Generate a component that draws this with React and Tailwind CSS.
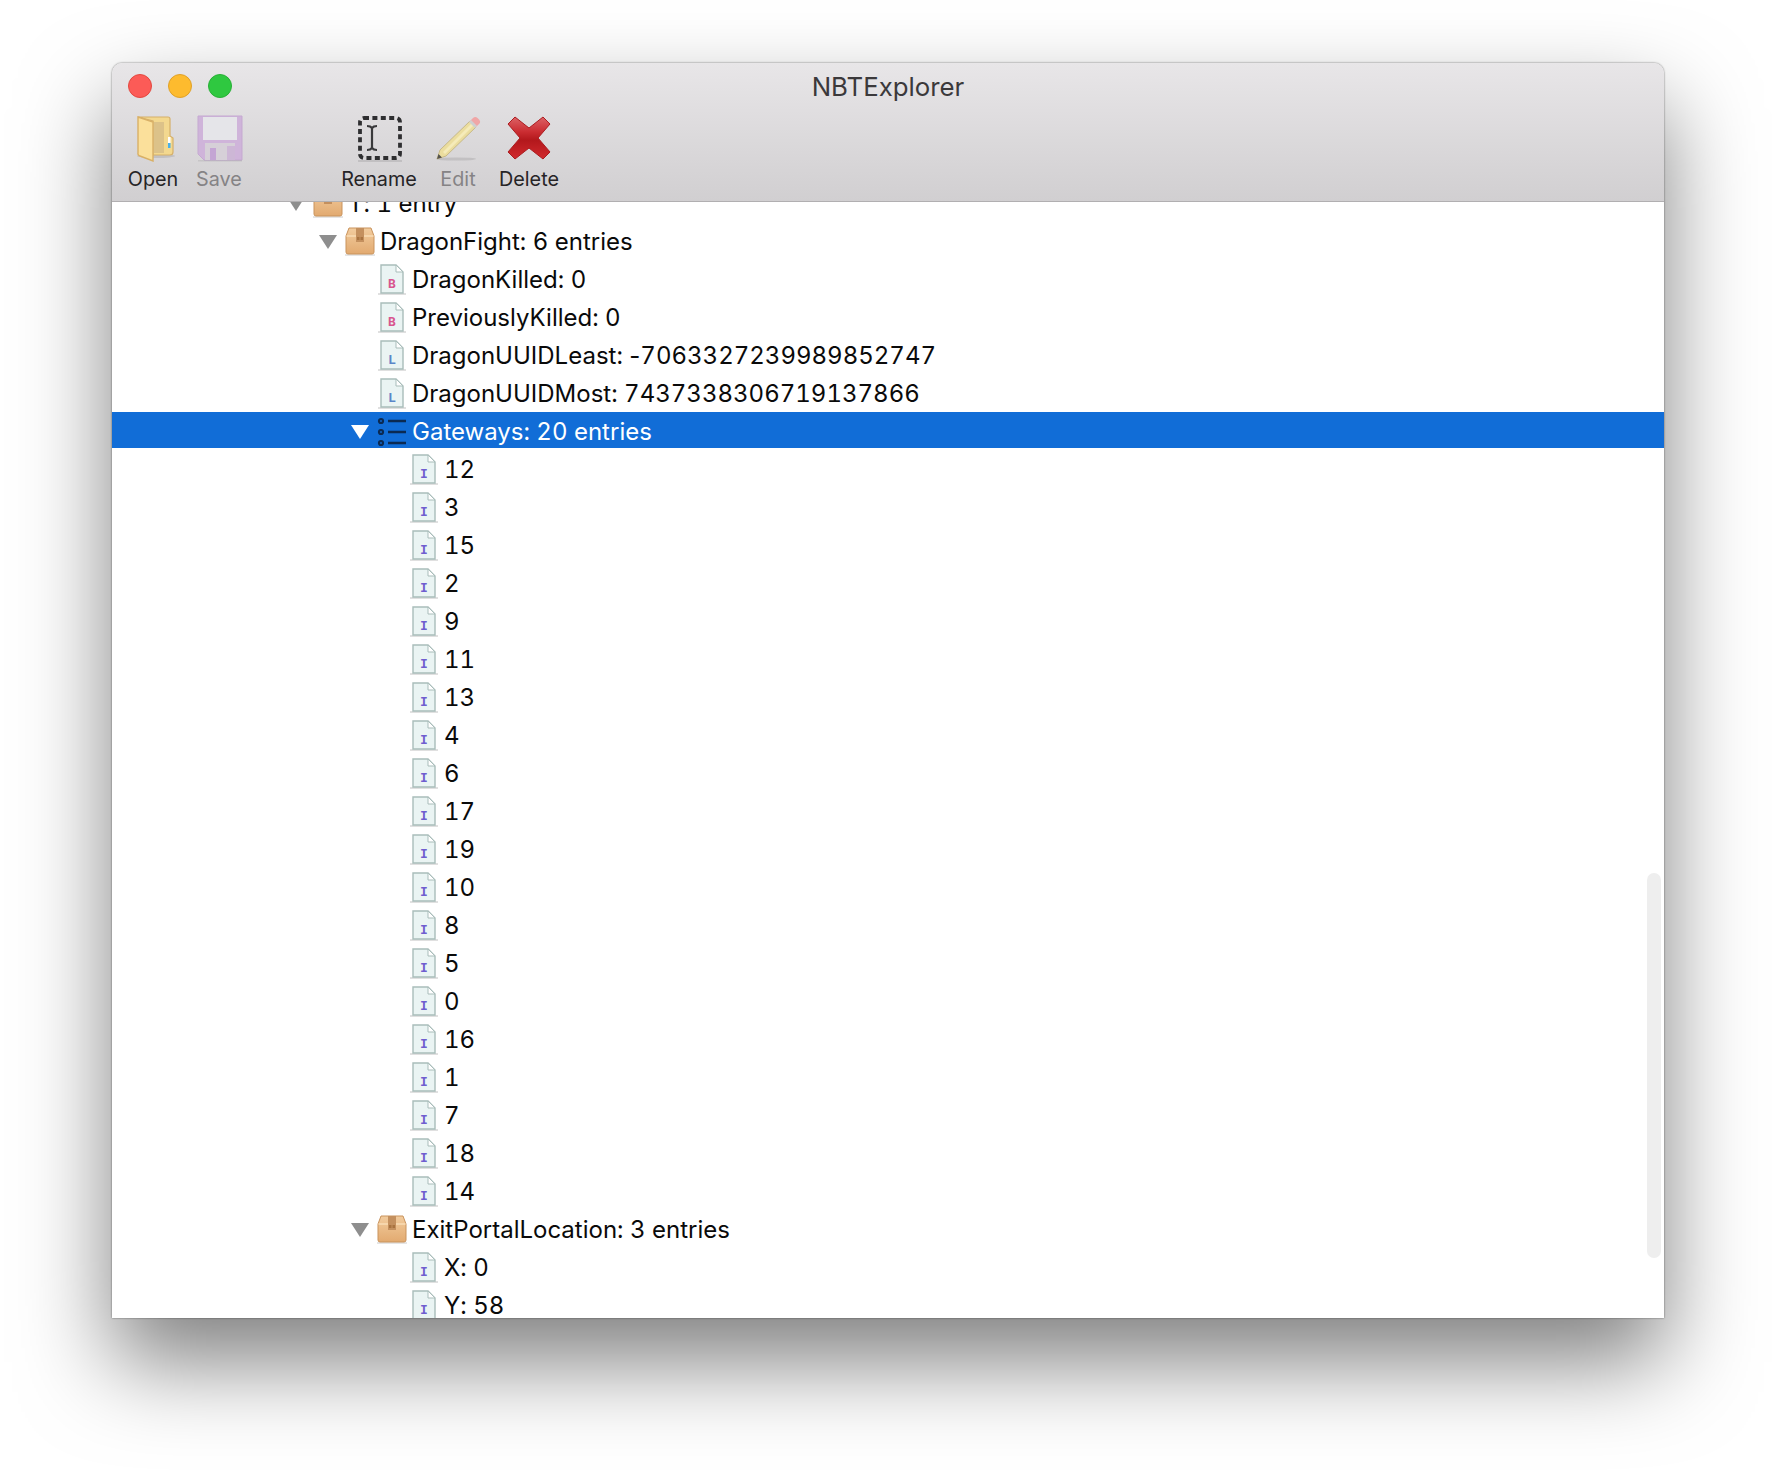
import React from "react";

const levelPadding = {
  0: "pl-[172px]",
  1: "pl-[204px]",
  2: "pl-[236px]",
  3: "pl-[268px]",
};

const gatewayIds = [12, 3, 15, 2, 9, 11, 13, 4, 6, 17, 19, 10, 8, 5, 0, 16, 1, 7, 18, 14];

const rows = [
  { level: 0, kind: "box", open: true, label: "T: 1 entry" },
  { level: 1, kind: "box", open: true, label: "DragonFight: 6 entries" },
  { level: 2, kind: "B", label: "DragonKilled: 0" },
  { level: 2, kind: "B", label: "PreviouslyKilled: 0" },
  {
    level: 2,
    kind: "L",
    // tabular figures widen the hyphen too, so it sits outside them
    label: (
      <>
        DragonUUIDLeast: <span className="[font-variant-numeric:normal]">-</span>7063327239989852747
      </>
    ),
  },
  { level: 2, kind: "L", label: "DragonUUIDMost: 7437338306719137866" },
  { level: 2, kind: "list", open: true, selected: true, label: "Gateways: 20 entries" },
  ...gatewayIds.map((id) => ({ level: 3, kind: "I", label: String(id) })),
  { level: 2, kind: "box", open: true, label: "ExitPortalLocation: 3 entries" },
  { level: 3, kind: "I", label: "X: 0" },
  { level: 3, kind: "I", label: "Y: 58" },
];

const letterColors = { B: "#d8568f", L: "#5a86c8", I: "#6f5ecf" };

const FolderIcon = () => (
  <svg width="48" height="48" viewBox="0 0 48 48">
    <ellipse cx="27" cy="42" rx="19" ry="2" fill="#000" opacity="0.1" />
    <path d="M9 3h30a2 2 0 0 1 2 2v17l3 2v14a3 3 0 0 1-3 3H24V7z" fill="#f3d88f" stroke="#d6b06a" strokeWidth="1.200" />
    <rect x="24" y="8" width="11" height="31" fill="#dcc289" />
    <path d="M9 3l15 5v39L11 42a2.500 2.500 0 0 1-2-3z" fill="#fbe09b" stroke="#d9b066" strokeWidth="1.400" />
    <rect x="39" y="23" width="2.500" height="6" fill="#ffffff" />
    <rect x="39" y="29" width="2.500" height="5" fill="#4ab1e8" />
  </svg>
);

const SaveIcon = () => (
  <svg width="48" height="48" viewBox="0 0 48 48">
    <path d="M3 2h44v44H9l-6-6V2z" fill="#cfb4da" stroke="#c5a9d1" strokeWidth="1" />
    <rect x="8" y="3" width="34" height="23" fill="#e5e5e9" />
    <rect x="10" y="29" width="30" height="17" fill="#d6d0d8" />
    <rect x="15" y="34" width="6" height="12" fill="#c4a5d4" />
    <rect x="32" y="32" width="8" height="14" fill="#cdb7d6" />
    <rect x="3" y="46" width="44" height="1.500" fill="#000" opacity="0.08" />
  </svg>
);

const RenameIcon = () => (
  <svg width="48" height="48" viewBox="0 0 48 48">
    <rect x="5" y="4" width="40" height="40" rx="4" fill="none" stroke="#2e2e30" strokeWidth="3.800" strokeDasharray="5 3.400" />
    <path d="M12 12c2 0 4 .6 5 2 1-1.400 3-2 5-2M17 14v20M12 36c2 0 4-.6 5-2 1 1.400 3 2 5 2" fill="none" stroke="#39393b" strokeWidth="2.200" />
    <rect x="3" y="46" width="44" height="2" fill="#000" opacity="0.1" />
  </svg>
);

const PencilIcon = () => (
  <svg width="48" height="48" viewBox="0 0 48 48">
    <ellipse cx="22" cy="45" rx="20" ry="1.600" fill="#000" opacity="0.1" />
    <path d="M3 45l3-9L36 7l6 6-30 29-9 3z" fill="#ebdd9e" stroke="#c7b98a" strokeWidth="1" />
    <path d="M9 38L38 9l2 2L11 40z" fill="#f5ebb9" />
    <path d="M3 45l1.500-5 3.500 3.500z" fill="#55534e" />
    <path d="M36 7l3-3c1.500-1.500 3-1.500 4.500 0l1.500 1.500c1.500 1.500 1.500 3 0 4.500l-3 3z" fill="#f0a6a6" />
    <path d="M35 8l2-2 6 6-2 2z" fill="#cfcfcf" />
  </svg>
);

const DeleteIcon = () => (
  <svg width="48" height="48" viewBox="0 0 48 48">
    <defs>
      <linearGradient id="del" x1="0" y1="0" x2="0" y2="1">
        <stop offset="0" stopColor="#dc6266" />
        <stop offset="0.35" stopColor="#cb2d32" />
        <stop offset="0.55" stopColor="#b3181c" />
        <stop offset="1" stopColor="#d12a2e" />
      </linearGradient>
    </defs>
    <path d="M10 3L24 14 38 3l7 7-12 14 12 14-7 7-14-11-14 11-7-7 12-14L3 10z" fill="url(#del)" stroke="#ab1c20" strokeWidth="1" strokeLinejoin="round" />
  </svg>
);

const BoxIcon = () => (
  <svg width="32" height="30" viewBox="0 0 32 30">
    <defs>
      <linearGradient id="box" x1="0" y1="0" x2="0" y2="1">
        <stop offset="0" stopColor="#f2cc9e" />
        <stop offset="1" stopColor="#e2aa70" />
      </linearGradient>
    </defs>
    <rect x="1" y="27" width="30" height="2" fill="#000" opacity="0.1" />
    <path d="M5 1h22l3 8v16a2 2 0 0 1-2 2H4a2 2 0 0 1-2-2V9z" fill="url(#box)" stroke="#c9935c" strokeWidth="1" />
    <path d="M2.500 9h27" stroke="#f8dcb6" strokeWidth="1.500" />
    <path d="M12 1h8v14h-8z" fill="#c4905e" />
    <path d="M13 10h2.500v3H13zM16.500 10H19v3h-2.500z" fill="#a9733f" />
  </svg>
);

const FileIcon = ({ letter }) => (
  <svg width="32" height="32" viewBox="0 0 32 32">
    <rect x="2" y="29" width="28" height="2" fill="#000" opacity="0.12" />
    <path d="M5 1h15l7 7v21H5z" fill="#eaf4f3" stroke="#a9bdba" strokeWidth="1.400" />
    <path d="M20 1v7h7z" fill="#fff" stroke="#a9bdba" strokeWidth="1" />
    <text x="16" y="24" textAnchor="middle" fontSize="13" fontWeight="700" fontFamily="DejaVu Sans Mono, monospace" fill={letterColors[letter]}>
      {letter}
    </text>
  </svg>
);

const ListIcon = () => (
  <svg width="32" height="30" viewBox="0 0 32 30">
    <g fill="none" stroke="#0b2a52" strokeWidth="2.200">
      <circle cx="5" cy="4" r="2" />
      <circle cx="5" cy="15" r="2" />
      <circle cx="5" cy="26" r="2" />
    </g>
    <path d="M12 4h18M12 15h18M12 26h18" stroke="#0b2a52" strokeWidth="2.500" />
  </svg>
);

const RowIcon = ({ kind }) => {
  if (kind === "box") return <BoxIcon />;
  if (kind === "list") return <ListIcon />;
  return <FileIcon letter={kind} />;
};

const toolbarItems = [
  { label: "Open", icon: <FolderIcon />, width: "w-[66px]" },
  { label: "Save", icon: <SaveIcon />, width: "w-[66px]", disabled: true },
  { spacer: true },
  { label: "Rename", icon: <RenameIcon />, width: "w-[84px]" },
  { label: "Edit", icon: <PencilIcon />, width: "w-[74px]", disabled: true },
  { label: "Delete", icon: <DeleteIcon />, width: "w-[68px]" },
];

const TreeRow = ({ row }) => (
  <div
    className={`h-9 pt-1 flex items-center shrink-0 ${levelPadding[row.level]} ${
      row.selected ? "bg-[#116dd7] text-white" : "text-[#0a0a0a]"
    }`}
  >
    <span className="w-6 flex justify-center">
      {row.open && (
        <svg width="18" height="14" viewBox="0 0 18 14">
          <polygon points="0,0 18,0 9,14" fill={row.selected ? "#ffffff" : "#8e8e8e"} />
        </svg>
      )}
    </span>
    <span className="w-8 ml-1 flex justify-center">
      <RowIcon kind={row.kind} />
    </span>
    <span className="ml-1 whitespace-nowrap tabular-nums [font-variant-ligatures:no-contextual]">{row.label}</span>
  </div>
);

const App = () => {
  return (
    <div className="w-[1776px] h-[1478px] bg-white pl-[112px] pt-[63px] font-['Inter','Liberation_Sans',sans-serif] overflow-hidden">
      <div className="w-[1552px] h-[1255px] flex flex-col bg-white rounded-t-[10px] shadow-[0_44px_90px_rgba(0,0,0,0.5),0_0_2px_rgba(0,0,0,0.6)]">
        {/* ======= Title bar + toolbar ======= */}
        <div className="h-[139px] shrink-0 rounded-t-[10px] bg-gradient-to-b from-[#e8e6e8] to-[#d1cfd1] border-b border-[#b1afb1]">
          <div className="h-[46px] grid grid-cols-[1fr_auto_1fr] items-center">
            <div className="flex gap-4 pl-4">
              <span className="w-6 h-6 rounded-full bg-[#fc5b57] border border-[#e3483f]" />
              <span className="w-6 h-6 rounded-full bg-[#fdbb2e] border border-[#e0a128]" />
              <span className="w-6 h-6 rounded-full bg-[#2fc840] border border-[#28b036]" />
            </div>
            <div className="text-[25.8px] pt-0.5 text-[#3b393b]">NBTExplorer</div>
          </div>
          <div className="flex pl-2 pt-[5px]">
            {toolbarItems.map((item, i) =>
              item.spacer ? (
                <div key={i} className="w-[85px]" />
              ) : (
                <div key={item.label} className={`${item.width} flex flex-col items-center`}>
                  {item.icon}
                  <span
                    className={`text-[19.8px] leading-[26px] mt-1 ${
                      item.disabled ? "text-[#858385]" : "text-[#262426]"
                    }`}
                  >
                    {item.label}
                  </span>
                </div>
              )
            )}
          </div>
        </div>

        {/* ======= Tree ======= */}
        <div className="relative flex-1 overflow-hidden text-[24px]">
          <div className="-mt-[18px] flex flex-col gap-0.5">
            {rows.map((row, i) => (
              <TreeRow key={i} row={row} />
            ))}
          </div>
          <div className="absolute right-[3px] top-[671px] w-[14px] h-[385px] rounded-full bg-[#eeeeee]" />
        </div>
      </div>
    </div>
  );
};

export default App;
